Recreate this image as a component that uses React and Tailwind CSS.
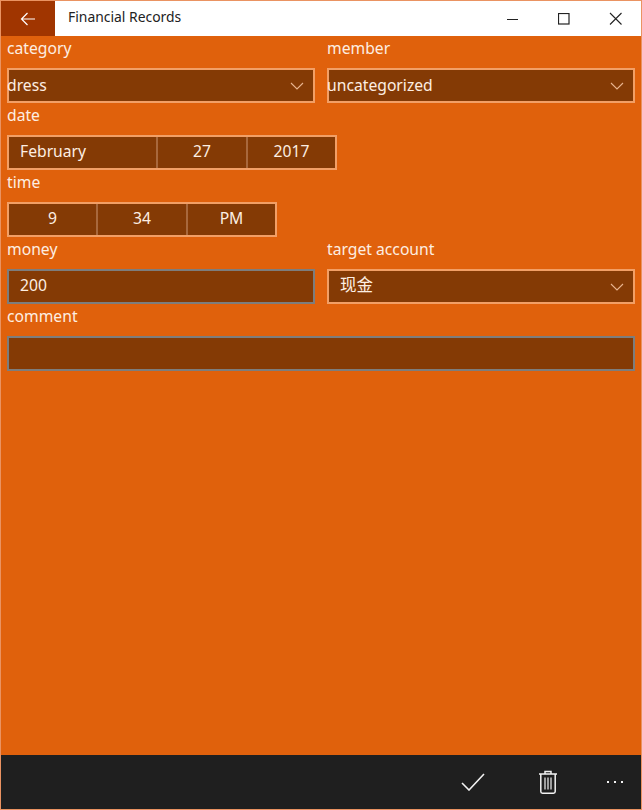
import React from 'react';

const Chevron = () => (
  <svg width="14" height="8" viewBox="0 0 14 8" fill="none" className="absolute right-[9px] top-[12px]">
    <path d="M1 1l6 6 6-6" stroke="#e8b48f" strokeWidth="1.1" />
  </svg>
);

const Label = ({ children }) => (
  <div className="h-[32px] text-[15.7px] leading-[24px] text-[#fdeee2]">{children}</div>
);

const Select = ({ value, inset }) => (
  <div className={`relative flex h-[35px] items-center border-2 border-[#f29f66] bg-[#843a05] text-[#fdeee2] ${inset ? 'pl-[11px] text-[16.5px]' : 'text-[15.7px]'}`}>
    <span className={inset ? '-mt-[2px]' : '-ml-[2px]'}>{value}</span>
    <Chevron />
  </div>
);

const Input = ({ value }) => (
  <div className="flex h-[35px] items-center border-2 border-[#7d7d7d] bg-[#843a05] pl-[11px] text-[15.7px] text-[#fdeee2]">
    <span className="-mt-[2px]">{value}</span>
  </div>
);

const Segments = ({ parts, width }) => (
  <div className={`flex h-[35px] border-2 border-[#f29f66] bg-[#843a05] text-[15.7px] text-[#fdeee2] ${width}`}>
    {parts.map((p, i) => (
      <div
        key={p.text}
        className={`flex items-center ${p.width} ${p.left ? 'pl-[11px]' : 'justify-center'} ${i > 0 ? 'border-l-2 border-[#a8683c]' : ''}`}
      >
        <span className="-mt-[2px]">{p.text}</span>
      </div>
    ))}
  </div>
);

export default function App() {
  return (
    <div
      className="flex h-[810px] w-[642px] flex-col border border-[#ea9362] bg-[#e0610c]"
      style={{ fontFamily: '"Noto Sans", "Noto Sans CJK SC", sans-serif' }}
    >
      {/* Title bar */}
      <header className="flex h-[35px] items-center bg-white">
        <button className="flex h-full w-[54px] items-center justify-center bg-[#a03500]">
          <svg width="16" height="14" viewBox="0 0 16 14" fill="none">
            <path d="M15 7H1.5M7.5 1L1.5 7l6 6" stroke="#fff" strokeWidth="1.2" />
          </svg>
        </button>
        <div className="ml-[13px] -mt-[2px] flex-1 text-[13.9px] text-[#222]">Financial Records</div>
        <div className="flex items-center">
          <svg width="12" height="12" viewBox="0 0 12 12" className="mr-[39px]">
            <path d="M0 6.5h11" stroke="#222" strokeWidth="1" />
          </svg>
          <svg width="12" height="12" viewBox="0 0 12 12" className="mr-[39px]">
            <rect x="0.5" y="0.5" width="10.5" height="10.5" fill="none" stroke="#222" strokeWidth="1.2" />
          </svg>
          <svg width="13" height="13" viewBox="0 0 13 13" className="mr-[19px]">
            <path d="M1 1l11.5 11.5M12.5 1L1 12.5" stroke="#222" strokeWidth="1.1" />
          </svg>
        </div>
      </header>

      {/* Form */}
      <main className="flex-1 px-[6px]">
        <div className="grid grid-cols-[308px_308px] gap-x-[12px]">
          <div>
            <Label>category</Label>
            <Select value="dress" />
          </div>
          <div>
            <Label>member</Label>
            <Select value="uncategorized" />
          </div>
        </div>
        <Label>date</Label>
        <Segments
          width="w-[330px]"
          parts={[
            { text: 'February', width: 'w-[147px]', left: true },
            { text: '27', width: 'w-[90px]' },
            { text: '2017', width: 'w-[89px]' },
          ]}
        />
        <Label>time</Label>
        <Segments
          width="w-[270px]"
          parts={[
            { text: '9', width: 'w-[87px]' },
            { text: '34', width: 'w-[90px]' },
            { text: 'PM', width: 'w-[89px]' },
          ]}
        />
        <div className="grid grid-cols-[308px_308px] gap-x-[12px]">
          <div>
            <Label>money</Label>
            <Input value="200" />
          </div>
          <div>
            <Label>target account</Label>
            <Select value="现金" inset />
          </div>
        </div>
        <Label>comment</Label>
        <div className="h-[35px] w-[628px] border-2 border-[#7d7d7d] bg-[#843a05]" />
      </main>

      {/* Command bar */}
      <footer className="flex h-[54px] items-center justify-end bg-[#1f1f1f]">
        <svg width="24" height="18" viewBox="0 0 24 18" fill="none" className="mr-[53px]">
          <path d="M1 10l7 7L23 1" stroke="#f2f2f2" strokeWidth="1.6" />
        </svg>
        <svg width="20" height="24" viewBox="0 0 20 24" fill="none" className="mr-[49px] -mt-[1px]">
          <path d="M1 4h18M7 4V1.5h6V4" stroke="#f2f2f2" strokeWidth="1.5" />
          <path d="M2.8 4v17.5c0 1 .7 1.7 1.7 1.7h11c1 0 1.7-.7 1.7-1.7V4" stroke="#f2f2f2" strokeWidth="1.5" />
          <path d="M7 7.5v12M10 7.5v12M13 7.5v12" stroke="#c8c8c8" strokeWidth="1.5" />
        </svg>
        <div className="mr-[18px] flex gap-[5px]">
          <span className="h-[2px] w-[2px] bg-[#f2f2f2]" />
          <span className="h-[2px] w-[2px] bg-[#f2f2f2]" />
          <span className="h-[2px] w-[2px] bg-[#f2f2f2]" />
        </div>
      </footer>
    </div>
  );
}
